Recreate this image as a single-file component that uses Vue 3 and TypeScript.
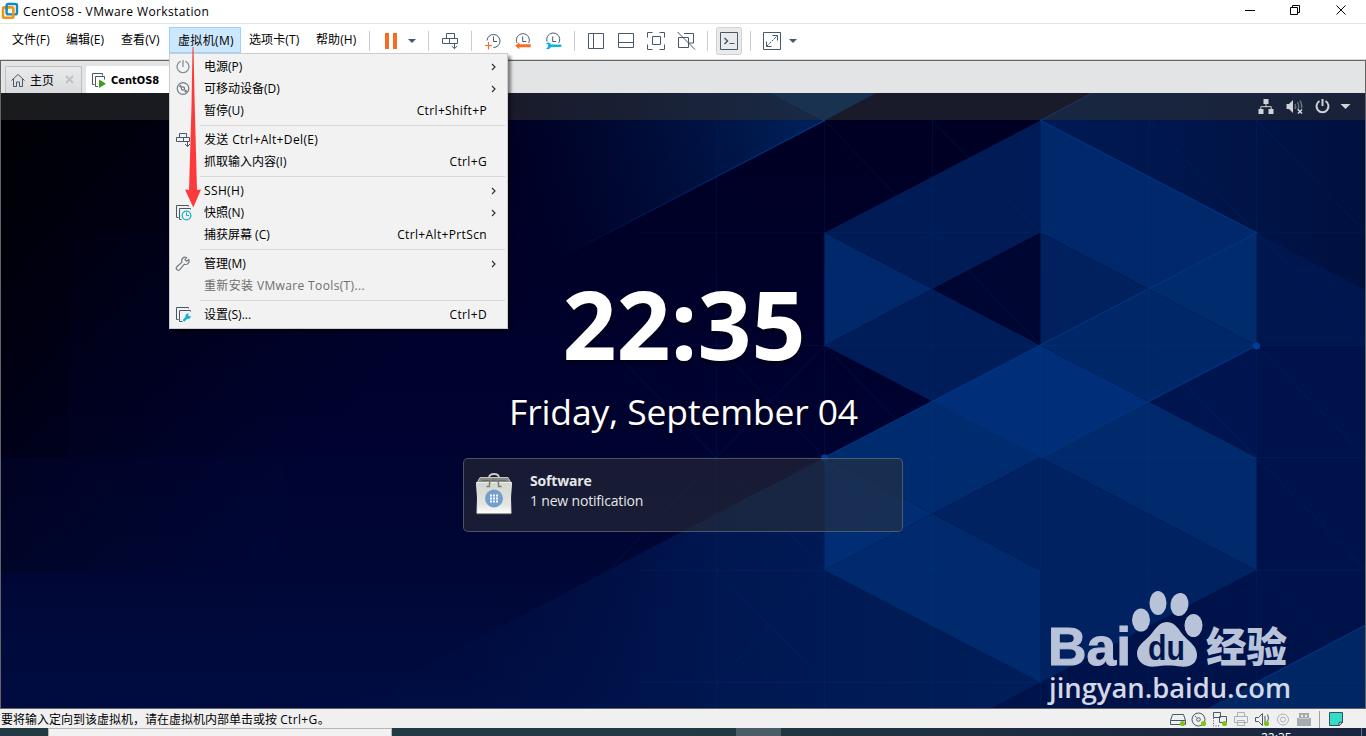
<script setup lang="ts">
interface MenuRow {
  label?: string
  key?: string
  sub?: boolean
  icon?: string
  disabled?: boolean
  wide?: boolean
  sep?: boolean
}

const menus: string[] = ['文件(F)', '编辑(E)', '查看(V)', '虚拟机(M)', '选项卡(T)', '帮助(H)']

const rows: MenuRow[] = [
  { label: '电源(P)', sub: true, icon: 'power' },
  { label: '可移动设备(D)', sub: true, icon: 'disc' },
  { label: '暂停(U)', key: 'Ctrl+Shift+P' },
  { sep: true },
  { label: '发送 Ctrl+Alt+Del(E)', icon: 'send', wide: true },
  { label: '抓取输入内容(I)', key: 'Ctrl+G' },
  { sep: true },
  { label: 'SSH(H)', sub: true, wide: true },
  { label: '快照(N)', sub: true, icon: 'snapshot' },
  { label: '捕获屏幕 (C)', key: 'Ctrl+Alt+PrtScn' },
  { sep: true },
  { label: '管理(M)', sub: true, icon: 'wrench' },
  { label: '重新安装 VMware Tools(T)...', disabled: true, wide: true },
  { sep: true },
  { label: '设置(S)...', key: 'Ctrl+D', icon: 'settings' },
]

const gridX: number[] = [608.5, 716.5, 824.5, 932.5, 1040.5, 1148.5, 1256.5]
const gridY: number[] = [232.6, 345, 457, 569.5, 681.5]
</script>

<template>
  <div class="window">
    <header class="titlebar">
      <svg class="logo" viewBox="0 0 18 18">
        <rect x="5.6" y="2" width="10.4" height="10.4" rx="1.6" fill="none" stroke="#1089c7" stroke-width="2.4" />
        <rect x="2" y="5.4" width="10.4" height="10.4" rx="1.6" fill="none" stroke="#f0930f" stroke-width="2.6" />
        <path d="M5.6 8V3.6" stroke="#1089c7" stroke-width="2.4" />
      </svg>
      <span class="title">CentOS8 - VMware Workstation</span>
      <svg class="controls" viewBox="0 0 136 23">
        <g fill="none" stroke="#000" stroke-width="1">
          <path d="M15 10.5h10" />
          <path d="M60.500 7.500h7v7h-7zM62.500 7.500v-2h7v7h-2" />
          <path d="M106.500 5.500l9 9M115.500 5.500l-9 9" />
        </g>
      </svg>
    </header>

    <div class="menubar">
      <nav class="menus">
        <span v-for="m in menus" :key="m" :class="['menu', { open: m === '虚拟机(M)' }]">{{ m }}</span>
      </nav>
      <div class="toolbar">
        <i class="sep"></i>
        <svg class="tool" viewBox="0 0 30 30"><path d="M9 7h4v16H9zM17 7h4v16h-4z" fill="#fb6a22" /></svg>
        <svg class="caret" viewBox="0 0 12 30"><path d="M2 13h8l-4 4z" fill="#475968" /></svg>
        <i class="sep after-caret"></i>
        <svg class="tool" viewBox="0 0 30 30">
          <path d="M11.500 7.500h8v5h-8zM7.500 12.500h7v5h-7zM14.500 12.500h8v5h-8zM19.500 17.500v5M16.800 20l2.700 2.700 2.700-2.700" class="ln" />
        </svg>
        <i class="sep"></i>
        <svg class="tool" viewBox="0 0 30 30">
          <path d="M9 14.500a6.500 6.500 0 1 1 6.500 7M15.500 10.500v5h3.500" class="ln" />
          <path d="M10.500 16v7.500M7 19.500h7" stroke="#fb6a22" stroke-width="1.200" fill="none" />
        </svg>
        <svg class="tool" viewBox="0 0 30 30">
          <path d="M9 17a6.500 6.500 0 1 1 11.700 0M14.700 10.500v5h3.500" class="ln" />
          <path d="M7.300 19.700l4-3.500v2h11.400v3H11.300v2z" fill="#fb6a22" />
        </svg>
        <svg class="tool" viewBox="0 0 30 30">
          <path d="M9 15.500a6.500 6.500 0 1 1 11.700 1.500M14.700 10.500v5h3.500" class="ln" />
          <path d="M8 17.200a3.200 3.200 0 0 1 5 1.200h9.200a1.300 1.300 0 0 1 0 2.700H13a3.200 3.200 0 0 1-5 1.300l2-1.300v-2.600z" fill="#06b6dd" />
        </svg>
        <i class="sep"></i>
        <svg class="tool" viewBox="0 0 30 30"><path d="M7.500 7.500h15v15h-15zM12.500 7.500v15" class="ln" /></svg>
        <svg class="tool" viewBox="0 0 30 30"><path d="M7.500 7.500h15v14h-15zM7.500 16.500h15" class="ln" /></svg>
        <svg class="tool" viewBox="0 0 30 30">
          <path d="M6.500 11.500v-5h5M18.500 6.500h5v5M23.500 18.500v5h-5M11.500 23.500h-5v-5M11.500 10.500h8v8h-8z" class="ln" />
        </svg>
        <svg class="tool" viewBox="0 0 30 30">
          <path d="M7.500 11.500h10v10h-10zM13 7.500h9.500v9.500h-5M6.500 6l17.500 17.500" class="ln" />
        </svg>
        <i class="sep"></i>
        <svg class="tool" viewBox="0 0 30 30">
          <rect x="2.500" y="1.500" width="25" height="27" rx="2" fill="#e9eaeb" stroke="#d2d2d2" />
          <path d="M6.500 6.500h17v17h-17zM15.500 17.500h5" class="ln" />
          <path d="M10.500 12l3 3-3 3" class="ln" stroke-width="1.500" />
        </svg>
        <i class="sep"></i>
        <svg class="tool" viewBox="0 0 30 30">
          <path d="M6.500 6.500h17v17h-17zM15.500 9.500h5v5M9.500 15.500v5h5" class="ln" />
          <path d="M10 20L20 10" class="ln" stroke-dasharray="2.200 1.200" />
        </svg>
        <svg class="caret" viewBox="0 0 12 30"><path d="M2 13h8l-4 4z" fill="#475968" /></svg>
      </div>
    </div>

    <div class="tabs">
      <div class="tab home">
        <svg class="tab-icon" viewBox="0 0 16 16">
          <path d="M1.500 8.500L8 2.500l6.500 6M3.500 7v7.500h3v-4.500h3v4.500h3V7" class="ln" />
        </svg>
        <span class="tab-name">主页</span>
        <svg class="tab-close" viewBox="0 0 9 9"><path d="M1 1l7 7M8 1L1 8" stroke="#bfc1c4" stroke-width="1.800" /></svg>
      </div>
      <div class="tab active">
        <svg class="tab-icon" viewBox="0 0 16 16">
          <path d="M3.500 12.500h-2v-11h10v2M7 14.500H4.500v-10h9v3" class="ln" />
          <path d="M8 7.500l7 4.200-7 4.300z" fill="#3f9c1c" />
        </svg>
        <span class="tab-name bold">CentOS8</span>
      </div>
    </div>

    <main class="guest">
      <svg class="wallpaper" viewBox="1 93 1364 614" preserveAspectRatio="none">
        <defs>
          <linearGradient id="base" x1="0" y1="0" x2="0" y2="1">
            <stop offset="0" stop-color="#000022" />
            <stop offset=".5" stop-color="#00022f" />
            <stop offset=".75" stop-color="#000634" />
            <stop offset="1" stop-color="#000d42" />
          </linearGradient>
          <linearGradient id="shade" x1="0" y1="0" x2="1" y2=".55">
            <stop offset="0" stop-color="#000003" stop-opacity="1" />
            <stop offset=".3" stop-color="#000008" stop-opacity=".55" />
            <stop offset=".72" stop-color="#000010" stop-opacity="0" />
          </linearGradient>
          <linearGradient id="wing" gradientUnits="userSpaceOnUse" x1="530" y1="200" x2="790" y2="100">
            <stop offset="0" stop-color="#001547" stop-opacity="0" />
            <stop offset="1" stop-color="#001f58" />
          </linearGradient>
          <linearGradient id="low" gradientUnits="userSpaceOnUse" x1="440" y1="640" x2="1040" y2="640">
            <stop offset="0" stop-color="#001048" stop-opacity=".2" />
            <stop offset=".5" stop-color="#001852" />
            <stop offset="1" stop-color="#001e5a" />
          </linearGradient>
          <linearGradient id="east" x1="0" y1="0" x2="1" y2="0">
            <stop offset="0" stop-color="#001a55" />
            <stop offset="1" stop-color="#00103f" />
          </linearGradient>
          <linearGradient id="edge" gradientUnits="userSpaceOnUse" x1="560" y1="260" x2="824" y2="120">
            <stop offset="0" stop-color="#003585" stop-opacity="0" />
            <stop offset="1" stop-color="#00388a" />
          </linearGradient>
        </defs>
        <rect x="0" y="93" width="1366" height="615" fill="url(#base)" />
        <rect x="0" y="93" width="620" height="480" fill="url(#shade)" />
        <g fill="#000" opacity=".1">
          <path d="M1 93h68v140H1zM69 93h108v140H69zM1 233h68v112H1zM177 93h108v140H177zM285 120h108v113H285zM1 345h68v112H1z" />
        </g>
        <path d="M1 457h284v112H1zM1 569h392v139H1zM393 569h108v112H393z" fill="#00083c" opacity=".2" />
        <polygon points="500,93 772,93 824.5,120.500 500,289" fill="url(#wing)" />
        <polygon points="772,93 876,93 824.5,120.500" fill="#003273" />
        <polygon points="1040.5,120.500 1092,93 1366,93 1366,457 1256.500,457 1256.500,232.600" fill="url(#east)" />
        <polygon points="1256.500,345 1366,345 1366,708 990,708 1040.500,681.500 1256.500,569.500" fill="#00124a" />
        <polygon points="1256.500,232.600 1366,290 1366,345 1256.500,345" fill="#00164e" />
        <polygon points="824.5,457 824.5,569.500 1040.500,681.500 990,708 342,708" fill="url(#low)" />
        <polygon points="824.5,232.600 1040.500,120.500 1040.500,232.600 932.5,288.700" fill="#001b55" />
        <polygon points="1040.500,120.500 1256.500,232.600 1148.500,288.700 1040.500,232.600" fill="#00286a" />
        <polygon points="824.5,232.600 932.5,288.700 824.5,345" fill="#00286a" />
        <polygon points="1040.500,232.600 1148.500,288.700 1040.500,345" fill="#00205e" />
        <polygon points="1040.500,232.600 1040.500,345 932.5,288.700" fill="#000632" />
        <polygon points="824.5,345 932.5,288.700 1040.500,345 932.5,401" fill="#001d59" />
        <polygon points="1256.500,232.600 1256.500,345 1148.500,288.700" fill="#002c6e" />
        <polygon points="824.5,457 1040.500,345 1040.500,457 932.5,513 " fill="#002b6e" />
        <polygon points="1040.500,345 1148.500,401 1040.500,457 932.5,401" fill="#002e79" />
        <polygon points="1040.500,345 1148.500,288.700 1256.500,345 1148.500,401" fill="#002869" />
        <polygon points="1148.500,401 1256.500,345 1256.500,457" fill="#001550" />
        <polygon points="1040.500,457 1148.500,401 1256.500,457 1256.500,569.500" fill="#002a6c" />
        <polygon points="824.5,457 932.5,513 824.5,569.500" fill="#002d73" />
        <polygon points="824.5,569.500 932.5,513 1040.500,569.500 1040.500,681.500" fill="#002a6c" />
        <polygon points="932.5,513 1040.500,457 1256.500,569.500 1040.500,681.500 1040.500,569.500" fill="#002260" />
        <polygon points="1206,708 1256.500,681.500 1366,624 1366,708" fill="#002664" />
        <g stroke="#00469c" stroke-opacity=".14" fill="none">
          <path v-for="x in gridX.slice(1)" :key="'x' + x" :d="`M${x} 120V708`" />
          <path v-for="y in gridY" :key="'y' + y" :d="`M640 ${y}H1366`" />
          <path d="M608.500 345L824.500 569.500M716.500 345L824.500 457M824.500 345L716.500 457L608.500 569.500M824.500 345L932.500 457M824.500 120.500L1040.500 345M932.500 120.500L1040.500 232.600M1148.500 120.500L1256.500 232.600M1256.500 120.500L1366 232.600M1256.500 232.600L1366 345M1256.500 345L1366 457M1256.500 457L1366 569.500M1148.500 345L1256.500 457M1040.500 345L824.500 569.500L716.500 681.500M824.500 345L932.500 232.600M824.500 457L1040.500 681.500M1256.500 569.500L1366 681.500M1256.500 569.500L1148.500 681.500M716.500 569.500L824.500 681.500" />
        </g>
        <path d="M540 268L824.500 120.500L772 93" fill="none" stroke="url(#edge)" stroke-width="1.200" />
        <path d="M1092 93l-51.500 27.500l216 112.100L824.500 457M1256.500 345L1040.500 457M1256.500 681.500L1366 624" fill="none" stroke="#003684" stroke-width="1.100" />
        <circle cx="824.5" cy="457.500" r="3.500" fill="#003e94" />
        <circle cx="1256.500" cy="345.500" r="3.500" fill="#003e94" />
      </svg>

      <div class="guest-bar">
        <svg class="guest-icons" viewBox="0 0 100 27">
          <g fill="#d0d2d3">
            <path d="M5.500 6h5v5h-5zM.500 16h5v5h-5zM10.500 16h5v5h-5z" />
            <path d="M8 11v3M2.800 16v-2.300h10.400V16" fill="none" stroke="#d0d2d3" stroke-width="1" />
            <path d="M28.500 11h2.500l4-4v13l-4-4h-2.500z" />
            <path d="M37 11q1.500 2.500 0 5M39.500 9q2.500 4.500 0 8M42 7.500q2.500 4 1.500 8" fill="none" stroke="#6b7180" stroke-width="1.400" />
            <path d="M40 16.500l4 4M44 16.500l-4 4" stroke="#d0d2d3" stroke-width="1.700" />
            <path d="M61.500 8a6 6 0 1 0 6 0M64.500 6v7" fill="none" stroke="#d0d2d3" stroke-width="2" />
            <path d="M82.500 11h10l-5 5z" />
          </g>
        </svg>
      </div>

      <section class="lock">
        <div class="clock">22:35</div>
        <div class="date">Friday, September 04</div>
        <div class="notice">
          <svg class="bag" viewBox="0 0 38 44">
            <defs>
              <linearGradient id="bagfill" x1="0" y1="0" x2="0" y2="1">
                <stop offset="0" stop-color="#d3d7cf" />
                <stop offset=".7" stop-color="#e3e5e0" />
                <stop offset="1" stop-color="#fff" />
              </linearGradient>
            </defs>
            <path d="M5 5.500h28l3 5.500H2z" fill="#888a85" stroke="#c4c6c1" />
            <path d="M7 8.500h24" stroke="#6b6d68" />
            <path d="M14 6q0-4 5-4t5 4" fill="none" stroke="#c9cbc6" stroke-width="1.800" />
            <path d="M1.500 10.500h35L35.500 26l.500 15.500H2L2.500 26z" fill="url(#bagfill)" stroke="#ecedea" />
            <path d="M2 41.700h34" stroke="#8b8d86" />
            <path d="M11.500 14.500h3q-1-7 4.500-7t4.500 7h3" fill="none" stroke="#7b7d78" stroke-width="1.500" />
            <circle cx="19" cy="26.500" r="9" fill="#729fcf" />
            <path d="M15 22.500h2v2h-2zM18 22.500h2v2h-2zM21 22.500h2v2h-2zM15 25.500h2v2h-2zM18 25.500h2v2h-2zM21 25.500h2v2h-2zM15 28.500h2v2h-2zM18 28.500h2v2h-2zM21 28.500h2v2h-2z" fill="#fff" />
          </svg>
          <div class="notice-text">
            <strong>Software</strong>
            <span>1 new notification</span>
          </div>
        </div>
      </section>

      <svg class="watermark" viewBox="1040 585 260 122">
        <g fill="#b8c2d9">
          <text x="1048" y="665" class="wm-bai" textLength="83" lengthAdjust="spacingAndGlyphs">Bai</text>
          <ellipse cx="1141" cy="620" rx="9" ry="11.500" />
          <ellipse cx="1158" cy="603" rx="8.500" ry="12" />
          <ellipse cx="1179.500" cy="604.500" rx="9" ry="11.500" transform="rotate(8 1179.500 604.500)" />
          <ellipse cx="1193.500" cy="625.500" rx="9" ry="11.500" />
          <path d="M1167 622c9 0 12 9 18 15s12 10 12 18c0 9-8 13-16 11.500c-8-1.500-18-1.500-26 0c-9 1-18-4-18-13c0-8 7-12 12-17s9-14.500 18-14.500z" />
          <text x="1206" y="662" class="wm-cn" textLength="81" lengthAdjust="spacingAndGlyphs">经验</text>
        </g>
        <text x="1148" y="660" class="wm-du" textLength="37" lengthAdjust="spacingAndGlyphs">du</text>
        <text x="1049" y="697.500" class="wm-url" textLength="242" lengthAdjust="spacingAndGlyphs">jingyan.baidu.com</text>
      </svg>
    </main>

    <footer class="status">
      <span class="status-text">要将输入定向到该虚拟机，请在虚拟机内部单击或按 <span class="spaced">Ctrl+G</span>。</span>
      <svg class="devices" viewBox="0 0 198 20">
        <g class="ln">
          <path d="M4.500 5.500h11l2 6v4h-15v-4zM2.500 11.500h15" />
          <circle cx="30.500" cy="10.500" r="6.500" /><circle cx="30.500" cy="10.500" r="1.800" /><path d="M27 7l1.500 1.500" />
          <path d="M45.500 3.500h7v5h-7zM51.500 7.500h7v6h-7z" />
          <path d="M45.500 9v8h7" stroke-dasharray="1 1.500" />
          <path d="M87.500 8.500h3l4-4v12l-4-4h-3zM97 7v6M99.500 5.500q2 4 0 7" />
        </g>
        <g fill="none" stroke="#a9b0b6">
          <path d="M69.500 7.500v-4h7v4M66.500 7.500h13v6h-13zM69.500 11.500h7v5h-7z" />
          <circle cx="115" cy="10.500" r="5.500" /><circle cx="115" cy="10.500" r="2.500" />
        </g>
        <path d="M131 9.500h10V4h-10zM129 9h14v8h-14z" fill="#a4abb1" />
        <path d="M133 6h2v2h-2zM137 6h2v2h-2z" fill="#f0f0f0" />
        <g fill="#7ec31c">
          <circle cx="14.500" cy="14.500" r="2.600" /><circle cx="35.500" cy="14.500" r="2.600" />
          <circle cx="56.500" cy="14.500" r="2.600" /><circle cx="98.500" cy="14.500" r="2.600" />
        </g>
        <path d="M151.500 2v17" stroke="#a0a0a0" />
        <path d="M161.500 3.500h13v10l-3 3h-10z" fill="#35dcc8" stroke="#37505e" />
        <path d="M174.500 13l-3.500.500v3.500z" fill="#fff" stroke="#37505e" />
      </svg>
    </footer>

    <div class="taskbar">
      <div class="search"></div>
      <div class="task-active"></div>
      <div class="task-clock">22:35</div>
      <i class="peek"></i>
    </div>

    <div class="popup">
      <template v-for="(r, i) in rows" :key="i">
        <div v-if="r.sep" class="rule"></div>
        <div v-else :class="['row', { disabled: r.disabled }]">
          <svg class="row-icon" viewBox="0 0 20 20">
            <g v-if="r.icon === 'power'" fill="none" stroke="#7c8791" stroke-width="1.200">
              <path d="M6.500 4.300a6 6 0 1 0 5 0M9 3v7" />
            </g>
            <g v-else-if="r.icon === 'disc'" fill="none" stroke="#6f7b85" stroke-width="1.200">
              <circle cx="9" cy="9.500" r="5.800" /><circle cx="9" cy="9.500" r="1.600" />
              <path d="M5.500 6.500l1.800 1.500M10.800 11.300l1.800 1.500" stroke-width="2.200" />
            </g>
            <path v-else-if="r.icon === 'send'" class="ln" d="M5.500 3.500h7v4h-7zM2.500 7.500h7v4h-7zM9.500 7.500h6v4h-6zM13.500 11.500v5M11 14l2.500 2.500L16 14" />
            <g v-else-if="r.icon === 'snapshot'">
              <path class="ln" d="M4.500 14.500h-2v-12h12v1M7.500 16.500h-2v-11h11v1" />
              <circle cx="12.500" cy="12.500" r="4.300" fill="#f2f2f2" stroke="#13b3cb" stroke-width="1.300" />
              <path d="M12.500 9.500v3h2.500" fill="none" stroke="#13b3cb" />
            </g>
            <path v-else-if="r.icon === 'wrench'" fill="none" stroke="#6f7b85" stroke-width="1.200" d="M12.500 3.500a3.500 3.500 0 0 0-4.600 4.600L2.900 12.800a2 2 0 0 0 2.900 2.900l4.500-5.500a3.500 3.500 0 0 0 4.500-4.700l-2 1.800-1.800-1.600z" />
            <g v-else-if="r.icon === 'settings'">
              <path class="ln" d="M4.500 14.500h-2v-12h12v1M8.500 16.500h-3v-11h11v1" />
              <path d="M9.500 16l3.500-4" stroke="#0fb1d4" stroke-width="2.500" />
              <path d="M11.500 11.500a2.800 2.800 0 0 1 3.500-3l-1 1.800 1.300 1.200 1.500-.9a2.800 2.800 0 0 1-3.600 3.200z" fill="#0fb1d4" />
            </g>
          </svg>
          <span :class="['row-label', { spaced: r.wide }]">{{ r.label }}</span>
          <span v-if="r.key" class="row-key spaced">{{ r.key }}</span>
          <svg v-if="r.sub" class="chev" viewBox="0 0 6 8"><path d="M1 1l3 3-3 3" fill="none" stroke="#333" stroke-width="1.200" /></svg>
        </div>
      </template>
    </div>

    <svg class="pointer" viewBox="0 0 18 162">
      <path d="M8.500 1h1L10.500 50l2.500 94 4-.500-7.700 18L1 143.500l4 .500L7.500 60z" fill="#fd3a3b" />
    </svg>
  </div>
</template>

<style>
body {
  overflow: hidden;
}
</style>

<style scoped>
.window {
  position: relative;
  width: 1366px;
  height: 736px;
  overflow: hidden;
  display: flex;
  flex-direction: column;
  background: #fff;
  color: #000;
  font: 12px "Open Sans", "Noto Sans CJK SC", sans-serif;
}
.window * {
  box-sizing: border-box;
}
svg {
  display: block;
  flex: none;
}
.ln {
  fill: none;
  stroke: #475968;
}
.spaced {
  letter-spacing: 0.36px;
}
.titlebar {
  display: flex;
  align-items: center;
  height: 24px;
  flex: none;
  border-bottom: 1px solid #e4e4e4;
}
.logo {
  width: 18px;
  height: 18px;
  margin: -1px 0 0 1px;
}
.title {
  margin-left: 4px;
  line-height: 23px;
  letter-spacing: 0.38px;
}
.controls {
  width: 136px;
  height: 23px;
  margin-left: auto;
}
.menubar {
  display: flex;
  height: 36px;
  flex: none;
  border-bottom: 1px solid #d8d8d8;
}
.menus {
  display: grid;
  grid-template-columns: 54px 55px 56px 72px 67px 61px;
  margin-left: 4px;
  padding-top: 3px;
}
.menu {
  height: 26px;
  padding-left: 8px;
  line-height: 26px;
  letter-spacing: 0.1px;
  white-space: nowrap;
}
.menu.open {
  letter-spacing: 0.35px;
  line-height: 25px;
  background: #cce8ff;
  border: 1px solid #99d1ff;
}
.toolbar {
  display: flex;
  align-items: center;
  height: 34px;
}
.sep {
  width: 1px;
  height: 20px;
  margin: 0 6px;
  background: #cbcbcb;
}
.sep:first-child {
  margin-left: 0;
}
.sep.after-caret {
  margin-left: 10px;
}
.tool {
  width: 30px;
  height: 30px;
}
.caret {
  width: 12px;
  height: 30px;
}
.tabs {
  display: flex;
  align-items: flex-end;
  height: 33px;
  flex: none;
  padding-left: 4px;
  background: #e3e4e6;
  border-top: 1px solid #646464;
  border-left: 1px solid #646464;
  border-right: 1px solid #646464;
}
.tab {
  display: flex;
  align-items: center;
  height: 27px;
}
.tab.home {
  width: 77px;
  padding-left: 4px;
  background: linear-gradient(#e9eaeb, #d9dbdd);
  border: 1px solid #bdbfc1;
  border-bottom: 0;
  border-radius: 2px 2px 0 0;
}
.tab.active {
  width: 110px;
  margin-left: 4px;
  padding-left: 5px;
  background: #fff;
  border-radius: 2px 0 0 0;
}
.tab-icon {
  width: 16px;
  height: 16px;
}
.tab-name {
  margin-left: 4px;
  padding-top: 1px;
  line-height: 18px;
}
.tab-name.bold {
  font: bold 11px "DejaVu Sans Condensed", sans-serif;
}
.tab-close {
  width: 9px;
  height: 9px;
  margin-left: 11px;
  margin-top: -2px;
}
.guest {
  position: relative;
  display: flex;
  flex-direction: column;
  height: 616px;
  flex: none;
  background: #000125;
  border: solid #646464;
  border-width: 0 1px 1px;
}
.wallpaper {
  position: absolute;
  inset: 0;
  width: 1364px;
  height: 615px;
}
.guest-bar {
  position: relative;
  display: flex;
  justify-content: flex-end;
  height: 27px;
  flex: none;
  background: rgba(46, 50, 50, 0.54);
}
.guest-icons {
  width: 100px;
  height: 27px;
  margin-right: 7.5px;
}
.lock {
  position: relative;
  display: flex;
  flex-direction: column;
  align-items: center;
  color: #fff;
}
.clock {
  margin-top: 149px;
  height: 110px;
  padding-left: 2px;
  font-size: 94.5px;
  font-weight: 700;
  line-height: 110px;
  text-shadow: 0 2px 4px rgba(0, 0, 0, 0.6);
}
.date {
  height: 50px;
  margin-top: 7px;
  padding-left: 1px;
  font-size: 35.5px;
  line-height: 50px;
  letter-spacing: -0.15px;
  white-space: nowrap;
  text-shadow: 0 2px 4px rgba(0, 0, 0, 0.6);
}
.notice {
  display: flex;
  width: 440px;
  height: 74px;
  margin-top: 22px;
  padding: 13px 11px;
  color: #e6e7e8;
  background: rgba(46, 50, 54, 0.52);
  border: 1px solid rgba(130, 136, 140, 0.5);
  border-radius: 5px;
}
.bag {
  width: 38px;
  height: 44px;
}
.notice-text {
  display: flex;
  flex-direction: column;
  margin-left: 17px;
  margin-top: -1px;
  font-size: 14px;
  line-height: 20px;
  letter-spacing: -0.18px;
}
.watermark {
  position: absolute;
  left: 1039px;
  top: 492px;
  width: 260px;
  height: 122px;
}
.wm-bai {
  font: bold 54px "Liberation Sans", sans-serif;
  stroke: #b8c2d9;
  stroke-width: 1px;
}
.wm-cn {
  font: 900 41px "Noto Sans CJK SC", sans-serif;
}
.wm-du {
  font: bold 35px "Liberation Sans", sans-serif;
  fill: #00164f;
}
.wm-url {
  font: 600 27px "Open Sans", sans-serif;
  fill: #d3d9e6;
}
.status {
  display: flex;
  justify-content: space-between;
  height: 19px;
  flex: none;
  background: #f0f0f0;
}
.status-text {
  margin-left: 1px;
  line-height: 21px;
  white-space: nowrap;
}
.devices {
  width: 198px;
  height: 20px;
}
.taskbar {
  display: flex;
  height: 8px;
  flex: none;
  overflow: hidden;
  background: linear-gradient(90deg, #213a44, #213a44 50%, #1c2840 85%, #192441);
}
.search {
  width: 344px;
  margin-left: 48px;
  background: #f2f2f2;
  border: 1px solid #b5b5b5;
  border-bottom: 0;
}
.task-active {
  width: 45px;
  margin-left: 344px;
  background: #4a5c65;
}
.task-clock {
  margin-left: 480px;
  color: #fff;
  line-height: 19px;
}
.peek {
  width: 1px;
  margin-left: auto;
  margin-right: 4px;
  background: #6a7384;
}
.popup {
  position: absolute;
  left: 169px;
  top: 53px;
  width: 339px;
  height: 276px;
  padding: 2px 2px;
  background: #f2f2f2;
  border: 1px solid #ccc;
  box-shadow: 3px 3px 3px rgba(0, 0, 0, 0.45);
}
.row {
  display: flex;
  align-items: center;
  height: 22px;
  padding-left: 2px;
  line-height: 22px;
  white-space: nowrap;
}
.row-icon {
  width: 20px;
  height: 20px;
}
.row-label {
  margin-left: 10px;
}
.disabled {
  color: #6d6d6d;
}
.row-key {
  margin-left: auto;
  margin-right: 18px;
}
.chev {
  width: 6px;
  height: 8px;
  margin-left: auto;
  margin-right: 8px;
}
.rule {
  height: 7px;
  margin-left: 28px;
  border-top: 1px solid #d7d7d7;
  transform: translateY(3px);
}
.pointer {
  position: absolute;
  left: 184px;
  top: 46px;
  width: 18px;
  height: 162px;
}
</style>
